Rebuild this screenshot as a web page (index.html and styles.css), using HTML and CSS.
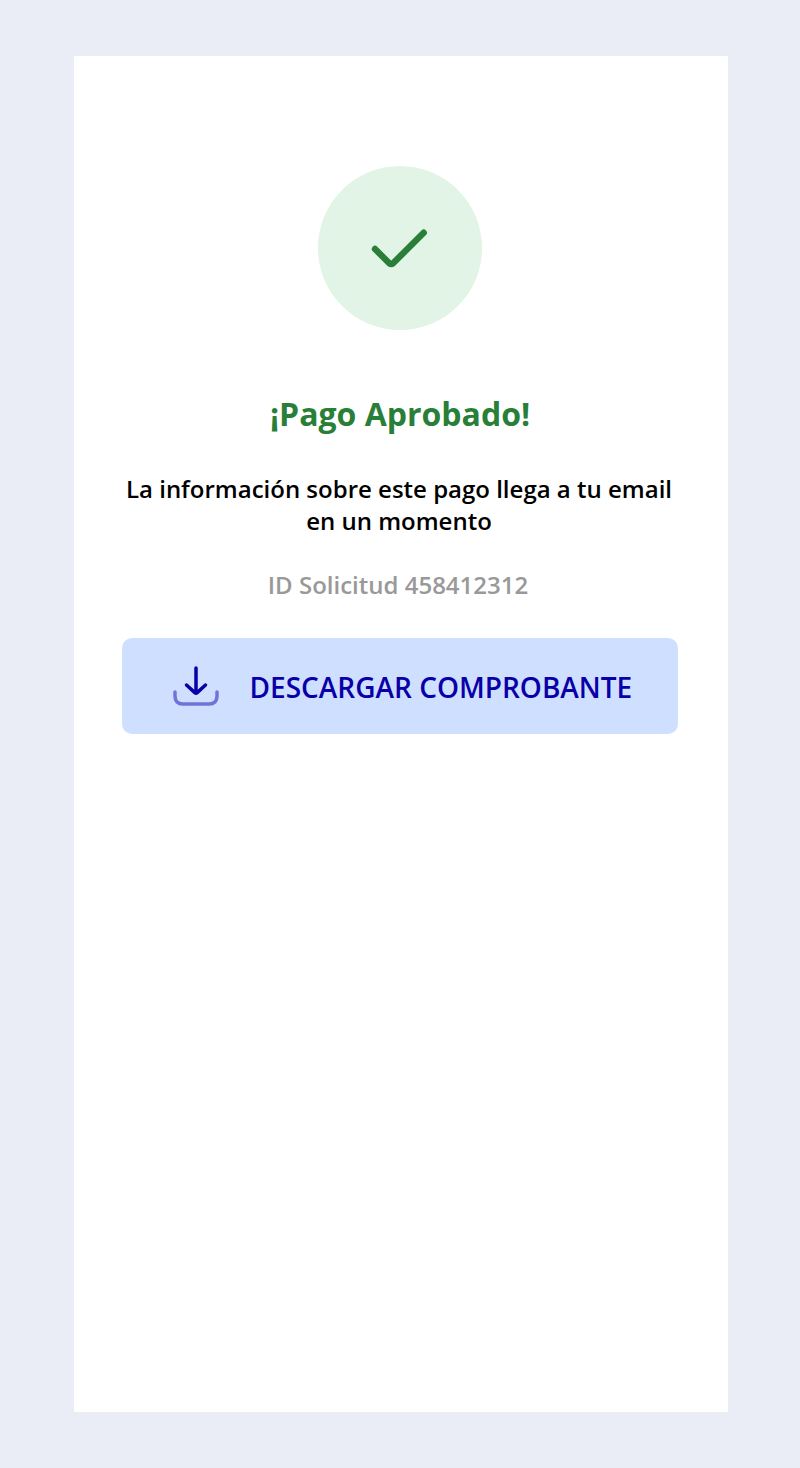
FILE: index.html
```html
<!DOCTYPE html>
<html lang="es">
<head>
<meta charset="utf-8">
<title>Pago Aprobado</title>
<link rel="stylesheet" href="styles.css">
</head>
<body>
<main class="card">
  <div class="status">
    <svg class="check" width="164" height="164" viewBox="0 0 164 164" fill="none"><path d="M57 83L71.300 97.300Q73.200 98.600 75.100 97.300L105.700 66.700" stroke="#297f38" stroke-width="6.400" stroke-linecap="round" stroke-linejoin="round"/></svg>
  </div>
  <h1 class="title">¡Pago Aprobado!</h1>
  <p class="message">La información sobre este pago llega a tu email<br>en un momento</p>
  <p class="request">ID Solicitud 458412312</p>
  <button class="download">
    <svg class="icon" width="48" height="48" viewBox="0 0 48 48" fill="none" stroke="#0900a8" stroke-width="3.500" stroke-linecap="round" stroke-linejoin="round"><path d="M24 6V31M14.500 23L22.800 30.600Q24 31.600 25.200 30.600L33.500 23"/><path opacity=".48" d="M3 30V34Q3 42 11 42H37Q45 42 45 34V30"/></svg>
    <span class="label">DESCARGAR COMPROBANTE</span>
  </button>
</main>
</body>
</html>
```
FILE: styles.css
```css
* { box-sizing: border-box; }
body {
  margin: 0;
  height: 1468px;
  padding: 56px 72px 56px 74px;
  background: #eaedf6;
  font-family: "Open Sans", sans-serif;
}
.card {
  height: 1356px;
  padding: 110px 50px 0 48px;
  background: #fff;
  display: flex;
  flex-direction: column;
  align-items: center;
}
.status {
  width: 164px;
  height: 164px;
  border-radius: 50%;
  background: #e2f4e6;
}
.check { display: block; }
.title {
  margin: 62px 0 0;
  color: #297f38;
  font-size: 32px;
  line-height: 44px;
  font-weight: 700;
}
.message {
  margin: 37px 2px 0 0;
  color: #000;
  font-size: 24px;
  line-height: 32px;
  font-weight: 600;
  text-align: center;
  white-space: nowrap;
}
.request {
  margin: 32px 4px 0 0;
  color: #999;
  font-size: 24px;
  line-height: 32px;
  font-weight: 600;
}
.download {
  width: 556px;
  height: 96px;
  margin-top: 37px;
  padding: 0 0 0 50px;
  border: 0;
  border-radius: 10px;
  background: #cfdfff;
  color: #0900a8;
  display: flex;
  align-items: center;
  gap: 29.5px;
  font-family: inherit;
}
.icon { flex: none; }
.label {
  padding-top: 2px;
  font-size: 28px;
  line-height: 38px;
  font-weight: 600;
  white-space: nowrap;
}
```
